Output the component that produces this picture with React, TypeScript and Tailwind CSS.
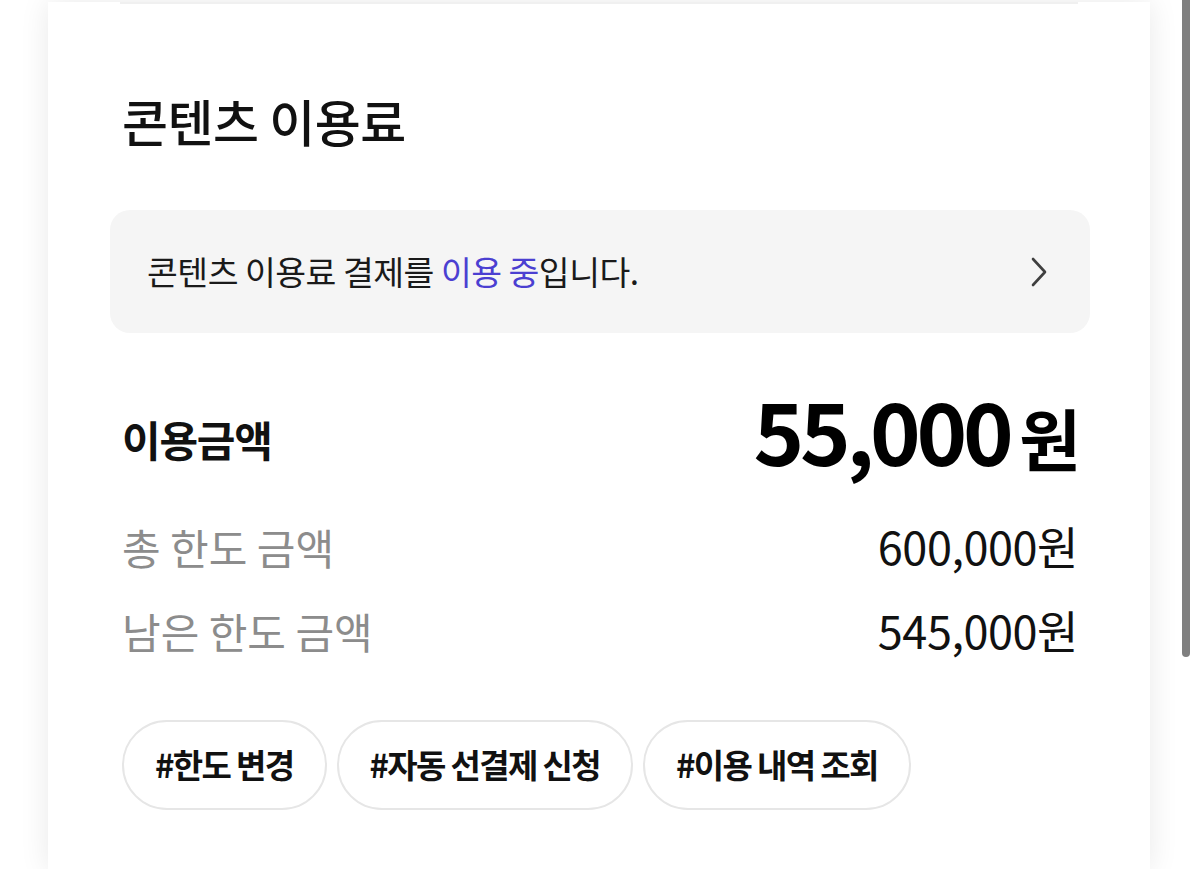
const tags = ["#한도 변경", "#자동 선결제 신청", "#이용 내역 조회"];

const ChevronRight = () => (
  <svg width="22" height="34" viewBox="0 0 22 34" fill="none">
    <path d="M5 4 L17 17 L5 30" stroke="#3f3f3f" strokeWidth="2.6" strokeLinecap="round" strokeLinejoin="round" />
  </svg>
);

export default function App() {
  return (
    <div
      className="relative w-[1200px] h-[869px] overflow-hidden bg-white"
      style={{ fontFamily: '"Noto Sans CJK KR", "Noto Sans", sans-serif' }}
    >
      <div className="ml-[48px] w-[1102px] h-full bg-white shadow-[0_0_28px_rgba(0,0,0,0.09)]">
        <div className="pl-[72px] pr-[72px]">
          <div className="mt-[2px] h-[2px] bg-[#f0f0f0]" />

          <h2 className="mt-[87px] pl-[2px] text-[50px] leading-[58px] font-medium tracking-[-0.01em] text-[#111]">
            콘텐츠 이용료
          </h2>

          {/* notice box */}
          <div className="mt-[61px] -ml-[10px] -mr-[12px] h-[123px] rounded-[20px] bg-[#f5f5f5] pl-[37px] pr-[40px] flex items-center justify-between">
            <p className="text-[33.5px] text-[#1a1a1a] tracking-[-0.015em]">
              콘텐츠 이용료 결제를 <span className="text-[#4b3fd1]">이용 중</span>입니다.
            </p>
            <ChevronRight />
          </div>

          {/* amount */}
          <div className="mt-[60px] h-[90px] flex items-center justify-between">
            <span className="pl-[2px] text-[42px] font-bold tracking-[-0.03em] text-[#111]">이용금액</span>
            <span className="flex items-baseline text-black -mt-[18px] -mr-[3px]">
              <span className="text-[86px] font-semibold tracking-[-0.05em] leading-none">55,000</span>
              <span className="ml-[10px] text-[67px] font-bold leading-none">원</span>
            </span>
          </div>

          <div className="mt-[38px] h-[50px] flex items-center justify-between">
            <span className="pl-[2px] text-[42px] text-[#8c8c8c]">총 한도 금액</span>
            <span className="text-[45px] text-[#111] tracking-[-0.01em]">600,000원</span>
          </div>
          <div className="mt-[34px] h-[50px] flex items-center justify-between">
            <span className="pl-[2px] text-[42px] text-[#8c8c8c]">남은 한도 금액</span>
            <span className="text-[45px] text-[#111] tracking-[-0.01em]">545,000원</span>
          </div>

          {/* tags */}
          <div className="mt-[65px] ml-[2px] flex gap-[10px]">
            {tags.map((t) => (
              <button
                key={t}
                className="h-[90px] px-[31px] rounded-full border-2 border-[#e6e6e6] bg-white text-[33px] font-bold tracking-[-0.05em] text-[#111]"
              >
                {t}
              </button>
            ))}
          </div>
        </div>
      </div>

      {/* scrollbar thumb */}
      <div className="absolute right-[10px] top-0 w-[8px] h-[657px] rounded-b-full bg-[#7f7f7f]" />
    </div>
  );
}
